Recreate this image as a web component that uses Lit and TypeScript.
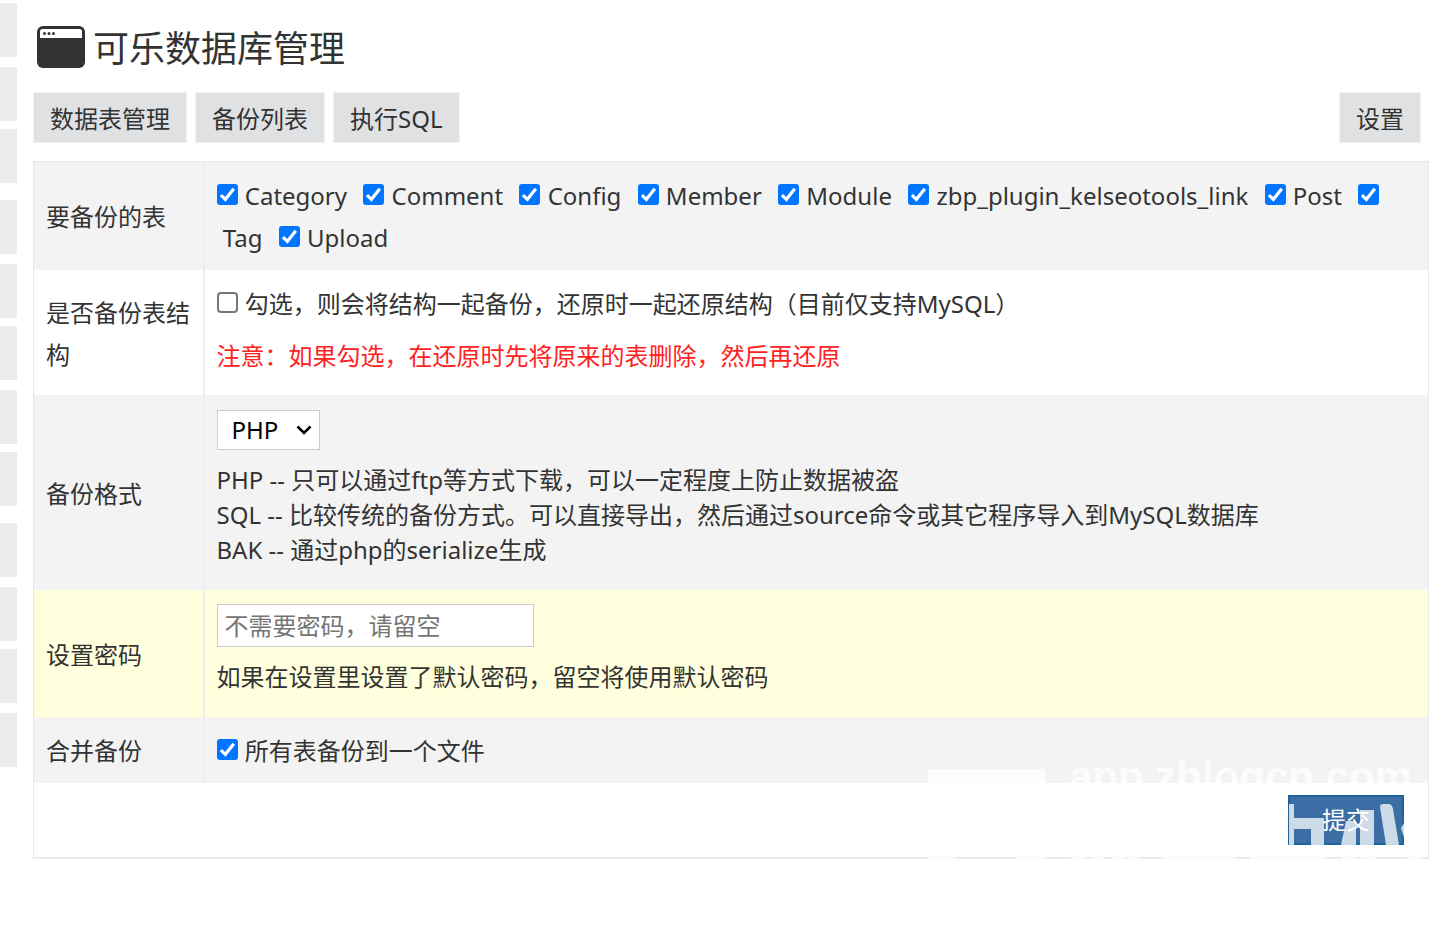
import { LitElement, html, css } from "lit";
import { customElement } from "lit/decorators.js";

const TABLES = ["Category", "Comment", "Config", "Member", "Module", "zbp_plugin_kelseotools_link", "Post", "Tag", "Upload"];

// Space above each entry of the collapsed side menu; wider ones separate groups.
const SIDE_GAPS = [3, 10, 8, 17, 10, 8, 10, 8, 17, 10, 8, 10];

@customElement("app-root")
export class AppRoot extends LitElement {
  static styles = css`
    :host {
      display: flex;
      min-height: 100vh;
      background: #fff;
      color: #333;
      font: 24px/42px "Noto Sans", "Noto Sans CJK SC", sans-serif;
    }
    *, *::before, *::after { box-sizing: border-box; }
    .side { flex: none; width: 17px; display: flex; flex-direction: column; }
    .side-item { height: 54px; flex: none; background: #ececec; }
    .main { flex: 1; min-width: 0; padding: 20px 16px 0; }
    .title { margin: 0; display: flex; align-items: flex-start; gap: 8px; padding-left: 4px; font-size: 36px; font-weight: 400; line-height: 58px; }
    .title svg { flex: none; width: 48px; height: 42px; margin-top: 6px; }
    .tabs { display: flex; gap: 8px; margin: 14px 8px 18px 0; }
    .tab { padding: 6px 17px 3px; line-height: 42px; background: #dfe1e3; color: #333; text-decoration: none; box-shadow: 0 0 0 1px #f1f1f1 inset; }
    .tab.right { margin-left: auto; }
    .panel { position: relative; }
    table { width: 100%; border-collapse: collapse; border: 1px solid #e8e8e8; box-shadow: 0 1px 0 #eee; }
    th, td { padding: 13px 12px 11px; text-align: left; font-weight: 400; vertical-align: middle; }
    th { width: 170px; border-right: 2px solid #eee; }
    .grey { background: #f3f3f3; }
    .yellow { background: #ffffdd; }
    .item { margin-right: 10px; }
    input[type="checkbox"] {
      appearance: none;
      width: 21px;
      height: 21px;
      margin: 0 1px 0 0;
      vertical-align: 0;
      border: 2px solid #767676;
      border-radius: 4px;
      background: #fff;
    }
    input[type="checkbox"]:checked {
      border: 0;
      border-radius: 3px;
      background: #0075ff url("data:image/svg+xml,%3Csvg xmlns='http://www.w3.org/2000/svg' viewBox='0 0 20 20'%3E%3Cpath d='M3.700 10.500L8 14.600L16 4.500' fill='none' stroke='white' stroke-width='3'/%3E%3C/svg%3E");
    }
    p { margin: 10px 0 7px; }
    .warn { color: #f22; }
    .help { margin: 12px 0; line-height: 35px; }
    .pick { position: relative; width: 103px; margin-top: 2px; }
    .pick svg { position: absolute; right: 8px; top: 13px; width: 16px; height: 14px; pointer-events: none; }
    select { appearance: none; display: block; width: 100%; height: 40px; padding: 0 14px; border: 1px solid #ccc; border-radius: 0; background: #fff; color: #000; font: inherit; line-height: 36px; }
    input[type="password"] { display: block; width: 317px; height: 43px; margin-top: 1px; padding: 0 7px; border: 1px solid #ccc; font: inherit; }
    .note { margin: 9px 0 8px; }
    .foot { padding: 12px 24px 12px 12px; text-align: right; }
    .submit { display: block; width: 116px; height: 50px; margin-left: auto; border: 2px solid #1c659b; background: #3a6ea5; color: #fff; font: inherit; }
    .mark { position: absolute; right: 0; bottom: 0; width: 501px; height: 100px; overflow: visible; opacity: 0.75; pointer-events: none; }
    .mark text { font: bold 42px "Liberation Sans", sans-serif; }
  `;

  render() {
    return html`
      <div class="side">${SIDE_GAPS.map((g) => html`<div class="side-item" style="margin-top:${g}px"></div>`)}</div>
      <main class="main">
        <h1 class="title">
          <svg viewBox="0 0 48 42" aria-hidden="true"><rect width="48" height="42" rx="6" fill="#333" /><path d="M3 12V5.500Q3 3 5.500 3H42.500Q45 3 45 5.500V12Z" fill="#fff" /><g fill="#333"><circle cx="7.500" cy="7.500" r="1.500" /><circle cx="12" cy="7.500" r="1.500" /><circle cx="16.500" cy="7.500" r="1.500" /></g></svg>
          可乐数据库管理
        </h1>
        <nav class="tabs">
          <a class="tab" href="#tables">数据表管理</a><a class="tab" href="#backups">备份列表</a><a class="tab" href="#sql">执行SQL</a>
          <a class="tab right" href="#settings">设置</a>
        </nav>
        <form class="panel">
          <table>
            <tr class="grey">
              <th scope="row">要备份的表</th>
              <td>${TABLES.map((t) => html`<label class="item"><input type="checkbox" checked /><wbr />&nbsp;${t}</label> `)}</td>
            </tr>
            <tr>
              <th scope="row">是否备份表结构</th>
              <td>
                <label><input type="checkbox" /> 勾选，则会将结构一起备份，还原时一起还原结构（目前仅支持MySQL）</label>
                <p class="warn">注意：如果勾选，在还原时先将原来的表删除，然后再还原</p>
              </td>
            </tr>
            <tr class="grey">
              <th scope="row"><label for="format">备份格式</label></th>
              <td>
                <div class="pick">
                  <select id="format"><option>PHP</option><option>SQL</option><option>BAK</option></select>
                  <svg viewBox="0 0 16 14" aria-hidden="true"><path d="M1.500 3.500L8 10L14.500 3.500" fill="none" stroke="#000" stroke-width="2.500" /></svg>
                </div>
                <p class="help">PHP -- 只可以通过ftp等方式下载，可以一定程度上防止数据被盗<br />SQL -- 比较传统的备份方式。可以直接导出，然后通过source命令或其它程序导入到MySQL数据库<br />BAK -- 通过php的serialize生成</p>
              </td>
            </tr>
            <tr class="yellow">
              <th scope="row"><label for="password">设置密码</label></th>
              <td>
                <input id="password" type="password" placeholder="不需要密码，请留空" />
                <p class="note">如果在设置里设置了默认密码，留空将使用默认密码</p>
              </td>
            </tr>
            <tr class="grey">
              <th scope="row">合并备份</th>
              <td><label><input type="checkbox" checked /> 所有表备份到一个文件</label></td>
            </tr>
            <tr><td class="foot" colspan="2"><button class="submit" type="button">提交</button></td></tr>
          </table>
          <svg class="mark" viewBox="0 0 501 100" fill="#fff" aria-hidden="true">
            <path d="M0 11H117V30H0Z" />
            <text x="141" y="33">app.zblogcn.com</text>
            <path d="M361 46H366V60H396V87H383V71H366V87H361ZM413 87L418 63H428V87ZM432 52H446V87H432ZM452 49Q452 46 455 46H461Q464 46 465 51L471 87H458ZM476 65V80L473 70Z" />
            <path d="M0 98H27V101H0ZM88 98H117V101H88ZM143 98H157V101H143ZM164 98H176V101H164ZM184 98H197V101H184ZM200 98H211V101H200ZM235 98H307V101H235ZM322 98H397V101H322ZM414 98H428V101H414ZM433 98H448V101H433ZM479 98H493V101H479Z" />
          </svg>
        </form>
      </main>
    `;
  }
}
